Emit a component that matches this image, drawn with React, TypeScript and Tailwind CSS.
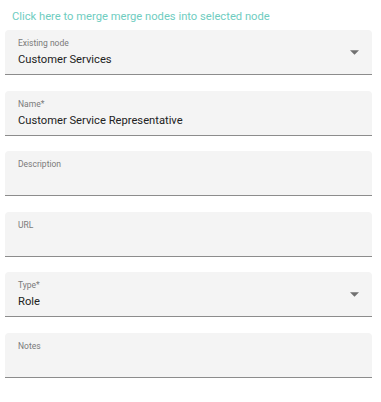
const font = { fontFamily: "Roboto, 'Noto Sans', sans-serif" };

type FieldProps = { label: string; value?: string; select?: boolean };

function Field({ label, value, select }: FieldProps) {
  return (
    <div className="relative h-[45px] rounded-t-[4px] bg-[#f4f4f4] border-b border-[#8c8c8c] pl-[13px] pr-3">
      <div className="pt-[8px] text-[8.5px] leading-[10px] text-[#7a7a7a]">{label}</div>
      {value && <div className="mt-[5px] text-[11.2px] leading-[14px] text-[#222]">{value}</div>}
      {select && (
        <svg
          className="absolute right-[13px] top-[20px]"
          width="9"
          height="5"
          viewBox="0 0 10 5"
        >
          <path d="M0 0 L5 5 L10 0 Z" fill="#707070" />
        </svg>
      )}
    </div>
  );
}

export default function App() {
  return (
    <div className="w-[381px] h-[402px] bg-white px-[5px] pt-[10px]" style={font}>
      <a className="block pl-[7px] text-[11.2px] leading-[14px] text-[#6fcdbf] cursor-pointer">
        Click here to merge merge nodes into selected node
      </a>
      <div className="mt-[6px] w-[367px] flex flex-col gap-[15.6px]">
        <Field label="Existing node" value="Customer Services" select />
        <Field label="Name*" value="Customer Service Representative" />
        <Field label="Description" />
        <Field label="URL" />
        <Field label="Type*" value="Role" select />
        <Field label="Notes" />
      </div>
    </div>
  );
}
